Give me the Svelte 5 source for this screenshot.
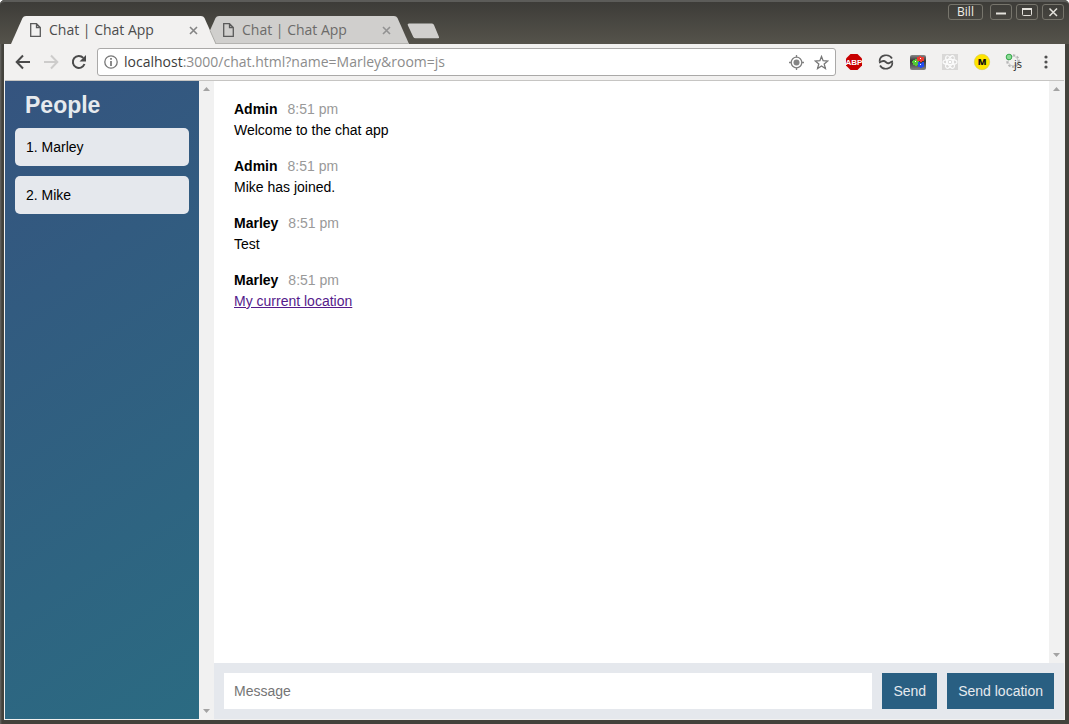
<script>
  const tabs = [
    { title: 'Chat | Chat App', active: true },
    { title: 'Chat | Chat App', active: false }
  ];
  const people = ['Marley', 'Mike'];
  const messages = [
    { from: 'Admin', time: '8:51 pm', text: 'Welcome to the chat app' },
    { from: 'Admin', time: '8:51 pm', text: 'Mike has joined.' },
    { from: 'Marley', time: '8:51 pm', text: 'Test' },
    { from: 'Marley', time: '8:51 pm', link: 'My current location' }
  ];
  let draft = $state('');
</script>

{#snippet scrollbar()}
  <div class="scrollbar" aria-hidden="true">
    <svg width="7" height="4" viewBox="0 0 7 4"><path d="M0 4 3.500 0 7 4z" fill="#a3a3a3" /></svg>
    <svg width="7" height="4" viewBox="0 0 7 4"><path d="M0 0h7L3.500 4z" fill="#a3a3a3" /></svg>
  </div>
{/snippet}

<div class="window">
  <header class="titlebar">
    <nav class="tabs" aria-label="Tabs">
      {#each tabs as tab}
        <div class="tab" class:active={tab.active}>
          <svg class="shape" viewBox="0 0 205 28" preserveAspectRatio="none" aria-hidden="true">
            <path d="M0 28 11.500 2Q12.500 0 15 0H190Q192.500 0 193.500 2L205 28z" fill={tab.active ? '#f2f1f0' : '#d0cfcd'} />
            {#if tab.active}
              <path d="M199 14.500 205 28" stroke="#aaa9a6" stroke-width="1" fill="none" />
            {:else}
              <path d="M0 27.500H205" stroke="#b4b3b0" fill="none" />
            {/if}
          </svg>
          <svg class="page" width="11" height="14" viewBox="0 0 11 14" aria-hidden="true">
            <path d="M1 .7H6.500L10.300 4.500V13.300H.7V.7zM6.500.7V4.500H10.300" fill="none" stroke="#5a5a5a" stroke-width="1.300" />
          </svg>
          <a class="tab-title" href="#chat">{tab.title}</a>
          <button class="tab-close" aria-label="Close tab">
            <svg width="9" height="9" viewBox="0 0 9 9"><path d="M1 1 8 8M8 1 1 8" stroke={tab.active ? '#858585' : '#929292'} stroke-width="1.600" /></svg>
          </button>
        </div>
      {/each}
      <button class="new-tab" aria-label="New tab">
        <svg width="33" height="16" viewBox="0 0 33 16"><path d="M2 .5H25Q26.500.5 27 2L32 14Q32.500 15.300 31 15.300H8.500Q7 15.300 6.300 14L.7 2Q.3.5 2 .5z" fill="#d0cfcd" /></svg>
      </button>
    </nav>
    <div class="controls">
      <button class="user">Bill</button>
      <button aria-label="Minimize"><svg width="20" height="14" viewBox="0 0 20 14"><path d="M5 8.500h10" stroke="#e5e3dd" stroke-width="2" /></svg></button>
      <button aria-label="Maximize"><svg width="20" height="14" viewBox="0 0 20 14"><rect x="5.500" y="3.500" width="9" height="7" rx="1" fill="none" stroke="#e5e3dd" /><path d="M5 4h10" stroke="#e5e3dd" stroke-width="2" /></svg></button>
      <button aria-label="Close"><svg width="20" height="14" viewBox="0 0 20 14"><path d="M6.500 3.500l7.500 7.500M14 3.500 6.500 11" stroke="#e5e3dd" stroke-width="1.500" /></svg></button>
    </div>
  </header>

  <div class="browser">
    <div class="toolbar">
      <button class="nav" aria-label="Back"><svg width="16" height="16" viewBox="0 0 16 16"><path d="M15 8H2M8 1.500 1.700 8 8 14.500" fill="none" stroke="#4a4a4a" stroke-width="2" /></svg></button>
      <button class="nav" aria-label="Forward"><svg width="16" height="16" viewBox="0 0 16 16"><path d="M1 8h13M8 1.500 14.300 8 8 14.500" fill="none" stroke="#cdcccb" stroke-width="2" /></svg></button>
      <button class="nav" aria-label="Reload"><svg width="16" height="16" viewBox="0 0 16 16"><path d="M13.500 10A6 6 0 1 1 12.300 3.900" fill="none" stroke="#4a4a4a" stroke-width="2" /><path d="M15 1V7.500H8.500z" fill="#4a4a4a" /></svg></button>
      <div class="address">
        <svg width="14" height="14" viewBox="0 0 14 14" aria-hidden="true"><circle cx="7" cy="7" r="6.200" fill="none" stroke="#777" stroke-width="1.300" /><path d="M7 3v1.800M7 6v5" stroke="#777" stroke-width="1.700" /></svg>
        <span class="url"><b>localhost</b>:3000/chat.html?name=Marley&amp;room=js</span>
        <button aria-label="Location access"><svg width="15" height="15" viewBox="0 0 15 15"><circle cx="7.500" cy="7.500" r="5.300" fill="none" stroke="#818181" stroke-width="1.300" /><circle cx="7.500" cy="7.500" r="3" fill="#858585" /><path d="M7.500 0v2.500M7.500 12.500V15M0 7.500h2.500M12.500 7.500H15" stroke="#818181" stroke-width="1.300" /></svg></button>
        <button aria-label="Bookmark"><svg width="15" height="15" viewBox="0 0 15 15"><path d="M7.500 1.500 9.100 5.700 13.800 6 10.200 9 11.400 13.500 7.500 11 3.600 13.500 4.800 9 1.200 6 5.900 5.700z" fill="none" stroke="#777" stroke-width="1.300" /></svg></button>
      </div>
      <div class="extensions">
        <button aria-label="Adblock Plus">
          <svg width="18" height="18" viewBox="0 0 18 18"><path d="M5.500 1h7L17 5.500v7L12.500 17h-7L1 12.500v-7z" fill="#c80000" /><text x="9" y="12" text-anchor="middle" font-size="8" font-weight="700" font-family="Liberation Sans" fill="#fff">ABP</text></svg>
        </button>
        <button aria-label="Wave">
          <svg width="18" height="18" viewBox="0 0 18 18"><path d="M2.600 8.500C2.600 1.500 12 .3 15 5.500M15.400 9.500C15.400 16.500 6 17.700 3 12.500" fill="none" stroke="#4d4d4d" stroke-width="1.700" /><path d="M2 9.500C4.500 9 5 7.500 7 8S10 11 12 10.200 14 8.500 16 8.500" fill="none" stroke="#4d4d4d" stroke-width="1.900" /></svg>
        </button>
        <button aria-label="Color blocks">
          <svg width="18" height="18" viewBox="0 0 18 18"><defs><linearGradient id="dark" x2="0" y2="1"><stop stop-color="#888" /><stop offset="0.400" stop-color="#333" /><stop offset="1" stop-color="#858585" /></linearGradient></defs><rect x="1" y="2" width="16" height="15" rx="2" fill="url(#dark)" /><path d="M8 4h2V3h2v1h3v4h-2v1h-2V8H8z" fill="#ed3b31" /><path d="M4 7h2V6h2v2h2v4H8v1H6v-1H4v-2H3V8h1z" fill="#54c935" /><path d="M9 9h2v1h2V9h2v5h-2v1h-2v-1H9z" fill="#244cf0" /><path d="M6 8h1v1H6zM11 5h1v1h-1zM11 11h1v1h-1z" fill="#fff" /></svg>
        </button>
        <button aria-label="React tools">
          <svg width="18" height="18" viewBox="0 0 18 18"><path d="M1 1h16v16H1z" fill="#d9d8d7" /><g fill="none" stroke="#fbfbfb" stroke-width="1.200"><ellipse cx="9" cy="9" rx="7" ry="2.700" /><ellipse cx="9" cy="9" rx="7" ry="2.700" transform="rotate(60 9 9)" /><ellipse cx="9" cy="9" rx="7" ry="2.700" transform="rotate(120 9 9)" /></g><circle cx="9" cy="9" r="1.300" fill="#fff" /></svg>
        </button>
        <button aria-label="M">
          <svg width="18" height="18" viewBox="0 0 18 18"><circle cx="9" cy="9" r="7.700" fill="#ffe500" stroke="#d4c84b" stroke-width=".6" /><text x="9" y="12" text-anchor="middle" font-size="9" font-weight="900" fill="#111">M</text></svg>
        </button>
        <button aria-label="JavaScript switch">
          <svg width="18" height="18" viewBox="0 0 18 18"><circle cx="8" cy="8" r="5.800" fill="none" stroke="#b5b5b5" stroke-width="2" stroke-dasharray="2.300 1.500" /><circle cx="8" cy="8" r="4.800" fill="#f2f1f0" stroke="#c0c0c0" stroke-width=".8" /><circle cx="4" cy="4" r="2.800" fill="#8bdc95" stroke="#35a84a" /><text x="9" y="15" font-size="11" fill="#222">js</text></svg>
        </button>
      </div>
      <button class="menu" aria-label="Menu"><svg width="4" height="14" viewBox="0 0 4 14"><g fill="#505050"><circle cx="2" cy="2" r="1.600" /><circle cx="2" cy="7" r="1.600" /><circle cx="2" cy="12" r="1.600" /></g></svg></button>
    </div>

    <div class="chat" id="chat">
      <aside class="sidebar">
        <h1>People</h1>
        <ol>
          {#each people as person, i}
            <li>{i + 1}. {person}</li>
          {/each}
        </ol>
      </aside>
      {@render scrollbar()}
      <main>
        <div class="feed">
          <ul class="messages">
            {#each messages as message}
              <li>
                <div class="meta"><strong>{message.from}</strong><time>{message.time}</time></div>
                <p>{#if message.link}<a href="#location">{message.link}</a>{:else}{message.text}{/if}</p>
              </li>
            {/each}
          </ul>
          {@render scrollbar()}
        </div>
        <form class="composer" onsubmit={(e) => e.preventDefault()}>
          <input type="text" placeholder="Message" aria-label="Message" autocomplete="off" bind:value={draft} />
          <button type="submit">Send</button>
          <button type="button">Send location</button>
        </form>
      </main>
    </div>
  </div>
</div>

<style>
  :global(body) { margin: 0; background: #fff; }
  .window, .window * { box-sizing: border-box; }
  svg { display: block; }
  button { font: inherit; color: inherit; background: none; border: 0; padding: 0; }

  .window {
    display: flex;
    flex-direction: column;
    min-height: 100vh;
    padding: 0 4px 4px;
    border-radius: 5px 5px 0 0;
    background: #43423c;
    box-shadow: inset 1px 0 #5f5e5a, inset 2px 0 #4c4b46;
    font-family: "Open Sans", "Noto Sans", sans-serif;
  }
  .titlebar {
    display: flex;
    justify-content: space-between;
    align-items: flex-start;
    height: 44px;
    margin: 0 -4px;
    padding: 0 5px 0 11px;
    border-top: 2px solid #5c5c59;
    border-radius: 5px 5px 0 0;
    background: linear-gradient(#3d3c38, #55534b);
  }
  .tabs { display: flex; padding-top: 14px; }
  .tab {
    position: relative;
    display: flex;
    align-items: center;
    width: 205px;
    height: 28px;
    padding: 0 18px 0 19px;
    color: #6c6b69;
    font-size: 14px;
    line-height: 18px;
  }
  .tab + .tab { margin-left: -12px; }
  .tab.active { z-index: 1; color: #4c4c4c; }
  .shape { position: absolute; inset: 0; width: 100%; height: 100%; }
  .page, .tab-title, .tab-close { position: relative; }
  .tab-title { flex: 1; margin-left: 8px; padding-bottom: 1px; color: inherit; text-decoration: none; }
  .new-tab { align-self: flex-start; margin: 7px 0 0 -2px; }

  .controls { display: flex; gap: 4px; padding-top: 2px; color: #f0eee8; font-size: 12px; line-height: 14px; }
  .controls button { width: 22px; height: 16px; border: 1px solid #77756c; border-radius: 3px; }
  .controls .user { width: 35px; margin-right: 3px; }

  .browser { flex: 1; display: flex; flex-direction: column; border: solid #f2f1f0; border-width: 0 1px 1px; }
  .toolbar {
    display: flex;
    align-items: center;
    height: 37px;
    padding: 0 16px 0 10px;
    border-bottom: 1px solid #c6c5c3;
    background: #f2f1f0;
  }
  .nav { margin-right: 12px; }
  .nav:nth-child(3) { margin-right: 10px; }
  .address {
    flex: 1;
    display: flex;
    align-items: center;
    gap: 10px;
    height: 28px;
    padding: 0 6px;
    border: 1px solid #aaa9a8;
    border-radius: 3px;
    background: #fff;
    color: #8c8c8c;
    font-size: 14px;
    line-height: 18px;
  }
  .url { flex: 1; margin-left: -4px; padding-bottom: 1px; }
  .url b { font-weight: 400; color: #3c3c3c; }
  .extensions { display: flex; gap: 14px; margin: 0 21px 0 9px; }

  .chat { flex: 1; display: flex; font-family: "Liberation Sans", Arial, sans-serif; font-size: 14px; color: #000; }
  .sidebar { width: 194px; padding: 10px; background: linear-gradient(145deg, #35547f, #2b6b82); }
  h1 { margin: 0 10px 9px; font-size: 23px; line-height: 28px; color: #e6eaee; }
  ol, ul { margin: 0; padding: 0; list-style: none; }
  ol { display: grid; gap: 10px; }
  ol li { padding: 11px; border-radius: 5px; background: #e5e8ed; line-height: 16px; }
  .scrollbar { display: flex; flex-direction: column; justify-content: space-between; align-items: center; width: 15px; padding: 6px 0; background: #f1f1f1; }
  main { flex: 1; display: flex; flex-direction: column; min-width: 0; }
  .feed { flex: 1; display: flex; background: #fff; }
  .messages { flex: 1; padding: 18px 20px; }
  .messages li { margin-bottom: 15px; line-height: 21px; }
  .meta { display: flex; gap: 10px; }
  time { color: #999; }
  p { margin: 0; }
  p a { color: #551a8b; }
  .composer { display: flex; gap: 10px; padding: 10px; background: #e5e8ed; }
  .composer input { flex: 1; min-width: 0; height: 36px; padding: 0 10px; border: 0; font: inherit; }
  .composer input::placeholder { color: #757575; }
  .composer button { height: 36px; padding: 0 11px; background: #295f82; color: #e6eaee; }
</style>
